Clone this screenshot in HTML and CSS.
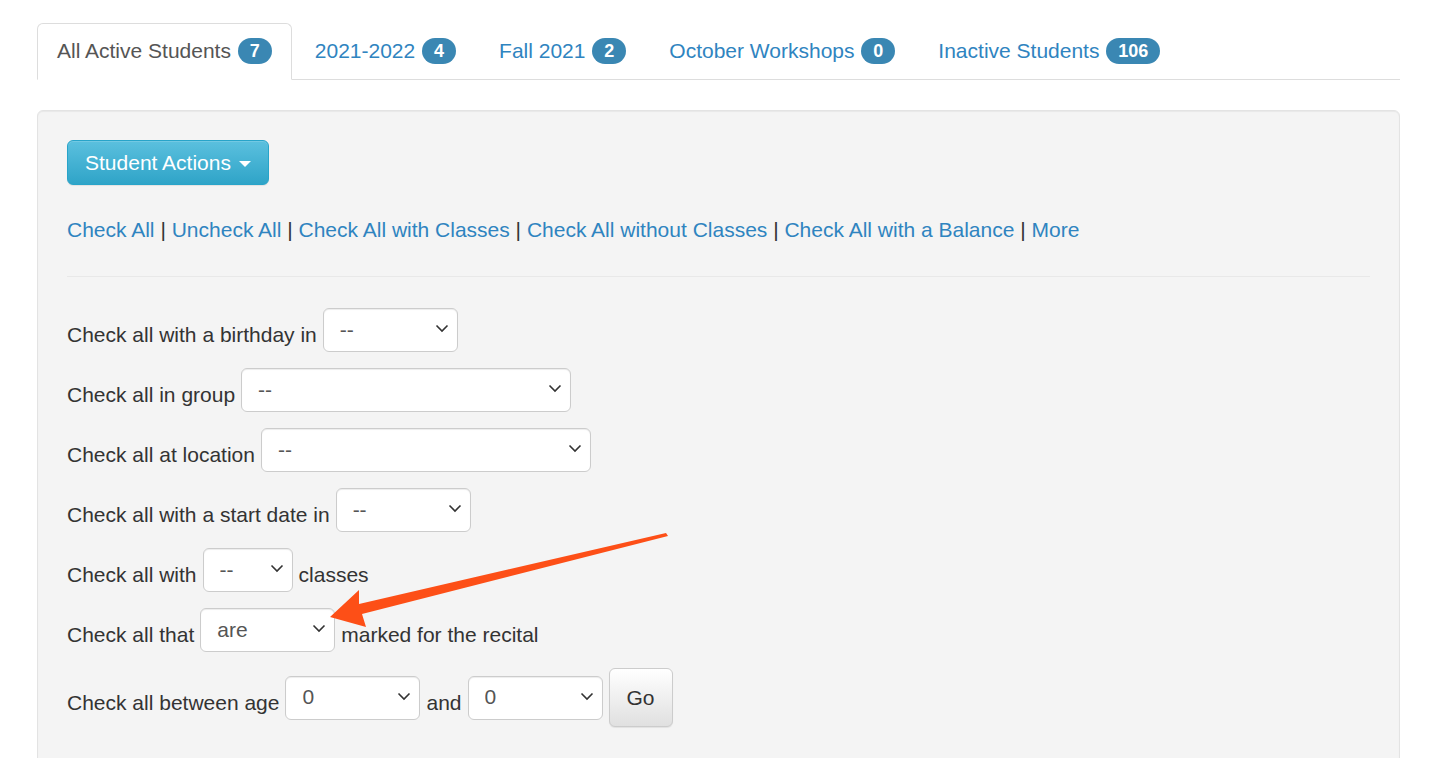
FILE: index.html
```html
<!DOCTYPE html>
<html lang="en">
<head>
    <meta charset="UTF-8">
    <title>Students</title>
    <link rel="stylesheet" href="styles.css">
</head>
<body>
    <div class="page">
        <ul class="nav-tabs">
            <li class="active"><a href="#">All Active Students <span class="badge">7</span></a></li>
            <li><a href="#">2021-2022 <span class="badge">4</span></a></li>
            <li><a href="#">Fall 2021 <span class="badge">2</span></a></li>
            <li><a href="#">October Workshops <span class="badge">0</span></a></li>
            <li><a href="#">Inactive Students <span class="badge">106</span></a></li>
        </ul>

        <div class="well">
            <button class="btn btn-info" type="button">Student Actions <span class="caret"></span></button>

            <p class="check-links">
                <a href="#">Check All</a> | <a href="#">Uncheck All</a> | <a href="#">Check All with Classes</a> | <a href="#">Check All without Classes</a> | <a href="#">Check All with a Balance</a> | <a href="#">More</a>
            </p>

            <hr>

            <form class="check-form">
                <div class="row">
                    <span class="lbl">Check all with a birthday in</span>
                    <select class="w-sm"><option>--</option></select>
                </div>
                <div class="row">
                    <span class="lbl">Check all in group</span>
                    <select class="w-lg"><option>--</option></select>
                </div>
                <div class="row">
                    <span class="lbl">Check all at location</span>
                    <select class="w-lg"><option>--</option></select>
                </div>
                <div class="row">
                    <span class="lbl">Check all with a start date in</span>
                    <select class="w-sm"><option>--</option></select>
                </div>
                <div class="row">
                    <span class="lbl">Check all with</span>
                    <select class="w-xs"><option>--</option></select>
                    <span class="lbl">classes</span>
                </div>
                <div class="row">
                    <span class="lbl">Check all that</span>
                    <select class="w-sm"><option>are</option></select>
                    <span class="lbl">marked for the recital</span>
                </div>
                <div class="row">
                    <span class="lbl">Check all between age</span>
                    <select class="w-sm"><option>0</option></select>
                    <span class="lbl">and</span>
                    <select class="w-sm"><option>0</option></select>
                    <button class="btn btn-default" type="button">Go</button>
                </div>
            </form>
        </div>
    </div>

    <!-- annotation arrow drawn over the screenshot -->
    <svg class="annotation" width="1430" height="758" viewBox="0 0 1430 758">
        <polygon fill="#fd4f17" points="330,617 366,627 362,614 668,536 666,533 359,604 359,590"/>
    </svg>
</body>
</html>
```

FILE: styles.css
```css
body {
    margin: 0;
    font-family: "Liberation Sans", Arial, sans-serif;
    font-size: 21px;
    line-height: 30px;
    color: #333;
    background-color: #fff;
}
a {
    color: #2f84c0;
    text-decoration: none;
}
.page {
    margin: 23px 30px 0 37px;
}
.nav-tabs {
    display: flex;
    list-style: none;
    margin: 0;
    padding: 0;
    border-bottom: 1px solid #ddd;
}
.nav-tabs li {
    margin-right: 3px;
    margin-bottom: -1px;
}
.nav-tabs a {
    display: block;
    padding: 12px 19px 13px;
    border: 1px solid transparent;
    border-radius: 6px 6px 0 0;
}
.nav-tabs .active a {
    color: #555;
    background-color: #fff;
    border-color: #ddd #ddd transparent;
}
.badge {
    display: inline-block;
    margin-left: 1px;
    padding: 4px 12px;
    font-size: 18px;
    font-weight: bold;
    line-height: 18px;
    color: #fff;
    background-color: #3a87b3;
    border-radius: 13px;
    vertical-align: 1px;
}
.well {
    margin-top: 30px;
    padding: 29px 29px 50px;
    background-color: #f4f4f4;
    border: 1px solid #e3e3e3;
    border-radius: 6px;
    box-shadow: inset 0 1px 1px rgba(0, 0, 0, 0.05);
}
.btn {
    font-family: inherit;
    font-size: 21px;
    line-height: 29px;
    border: 1px solid transparent;
    border-radius: 6px;
    cursor: pointer;
}
.btn-info {
    padding: 7px 17px;
    color: #fff;
    background-image: linear-gradient(to bottom, #5bc0de 0, #2fa4c8 100%);
    border-color: #28a4c9;
    box-shadow: inset 0 1px 0 rgba(255, 255, 255, 0.15), 0 1px 1px rgba(0, 0, 0, 0.075);
}
.caret {
    display: inline-block;
    width: 0;
    height: 0;
    margin-left: 2px;
    vertical-align: middle;
    border-top: 6px solid #fff;
    border-left: 6px solid transparent;
    border-right: 6px solid transparent;
}
.check-links {
    margin: 30px 0 0;
}
hr {
    margin: 31px 0 31px;
    border: 0;
    border-top: 1px solid #e8e8e8;
}
.check-form .row {
    display: flex;
    align-items: center;
    gap: 6px;
    margin-bottom: 16px;
}
.check-form .lbl {
    padding-top: 10px;
}
.check-form select {
    height: 44px;
    padding: 0 30px 2px 16px;
    font-family: inherit;
    font-size: 21px;
    color: #555;
    background-color: #fff;
    background-image: url("data:image/svg+xml;utf8,<svg xmlns='http://www.w3.org/2000/svg' width='14' height='9' viewBox='0 0 14 9'><path d='M1.5 1.5 L7 7 L12.5 1.5' fill='none' stroke='%23333' stroke-width='1.6'/></svg>");
    background-repeat: no-repeat;
    background-position: right 8px top 15px;
    border: 1px solid #ccc;
    border-radius: 6px;
    appearance: none;
    -webkit-appearance: none;
    box-shadow: inset 0 1px 1px rgba(0, 0, 0, 0.075);
}
.w-xs {
    width: 90px;
}
.w-sm {
    width: 135px;
}
.w-lg {
    width: 330px;
}
.btn-default {
    padding: 14px 17px;
    color: #333;
    background-image: linear-gradient(to bottom, #fff 0, #e0e0e0 100%);
    border-color: #ccc;
    box-shadow: inset 0 1px 0 rgba(255, 255, 255, 0.15), 0 1px 1px rgba(0, 0, 0, 0.075);
}
.annotation {
    position: absolute;
    left: 0;
    top: 0;
    pointer-events: none;
}
```
